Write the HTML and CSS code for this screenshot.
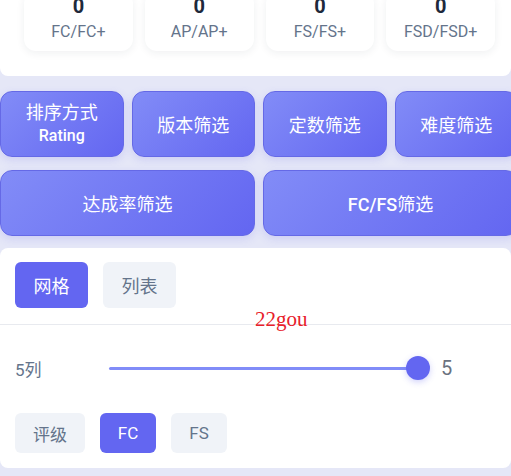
FILE: index.html
```html
<!DOCTYPE html>
<html lang="zh-CN">
<head>
    <meta charset="UTF-8">
    <meta name="viewport" content="width=device-width, initial-scale=1.0">
    <title>成绩统计</title>
    <link rel="stylesheet" href="styles.css">
</head>
<body>
    <!-- 统计卡片 -->
    <div class="stats-panel">
        <div class="stat-card">
            <div class="stat-value">0</div>
            <div class="stat-label">FC/FC+</div>
        </div>
        <div class="stat-card">
            <div class="stat-value">0</div>
            <div class="stat-label">AP/AP+</div>
        </div>
        <div class="stat-card">
            <div class="stat-value">0</div>
            <div class="stat-label">FS/FS+</div>
        </div>
        <div class="stat-card">
            <div class="stat-value">0</div>
            <div class="stat-label">FSD/FSD+</div>
        </div>
    </div>

    <!-- 筛选按钮 -->
    <div class="filters">
        <button class="filter-btn two-line">排序方式<span class="sub">Rating</span></button>
        <button class="filter-btn">版本筛选</button>
        <button class="filter-btn">定数筛选</button>
        <button class="filter-btn">难度筛选</button>
        <button class="filter-btn wide">达成率筛选</button>
        <button class="filter-btn wide"><span class="latin">FC/FS</span>筛选</button>
    </div>

    <!-- 显示设置 -->
    <div class="view-panel">
        <div class="tabs">
            <button class="tab active">网格</button>
            <button class="tab">列表</button>
        </div>
        <div class="watermark">22gou</div>

        <div class="settings">
            <div class="slider-row">
                <span class="slider-label">5列</span>
                <div class="slider">
                    <div class="track"></div>
                    <div class="thumb"></div>
                </div>
                <span class="slider-value">5</span>
            </div>

            <div class="chips">
                <button class="chip">评级</button>
                <button class="chip active">FC</button>
                <button class="chip">FS</button>
            </div>
        </div>
    </div>
</body>
</html>
```

FILE: styles.css
```css
body {
    margin: 0;
    padding: 0;
    width: 511px;
    height: 476px;
    overflow: hidden;
    background-color: #e5e7f7;
    font-family: Roboto, "Noto Sans CJK SC", sans-serif;
}

button {
    font-family: inherit;
    border: none;
    cursor: pointer;
}

/* Статистика сверху */
.stats-panel {
    height: 76px;
    box-sizing: border-box;
    background: #ffffff;
    border-radius: 0 0 8px 8px;
    display: flex;
    align-items: flex-end;
    gap: 12px;
    padding: 0 16px 25px 24px;
    overflow: hidden;
}

.stat-card {
    flex: 1;
    background: #ffffff;
    border-radius: 12px;
    box-shadow: 0 2px 8px rgba(30, 41, 59, 0.07);
    text-align: center;
    padding-bottom: 9px;
}

.stat-value {
    font-size: 20px;
    font-weight: bold;
    line-height: 28px;
    color: #1e293b;
}

.stat-label {
    margin-top: 2px;
    font-size: 16px;
    line-height: 20px;
    color: #64748b;
}

/* Фильтры */
.filters {
    width: 518px;
    display: grid;
    grid-template-columns: repeat(4, 123.5px);
    grid-auto-rows: 66px;
    gap: 13px 8px;
    padding: 15px 0 12px;
}

.filter-btn {
    background: linear-gradient(135deg, #828cf7 0%, #6366f1 100%);
    border: 1px solid #6569e6;
    border-radius: 12px;
    box-shadow: 0 3px 8px rgba(99, 102, 241, 0.18);
    color: #ffffff;
    font-size: 18px;
    font-weight: 400;
}

.filter-btn.wide {
    grid-column: span 2;
}

.filter-btn .latin {
    font-weight: 500;
}

.two-line {
    display: flex;
    flex-direction: column;
    align-items: center;
    justify-content: center;
    line-height: 23px;
}

.two-line .sub {
    font-size: 16px;
    font-weight: 500;
}

/* Панель вида */
.view-panel {
    position: relative;
    background: #ffffff;
    border-radius: 8px;
    height: 220px;
    box-sizing: border-box;
}

.tabs {
    display: flex;
    gap: 15px;
    padding: 14px 15px 16px;
    border-bottom: 1px solid #e8eaef;
}

.tab {
    width: 73px;
    height: 46px;
    border-radius: 6px;
    background: #f0f3f8;
    color: #64748b;
    font-size: 18px;
}

.tab.active {
    background: #6366f1;
    color: #ffffff;
}

.watermark {
    position: absolute;
    left: 255px;
    top: 61px;
    font-family: "Liberation Serif", serif;
    font-size: 21px;
    line-height: 21px;
    color: #e8202a;
}

.settings {
    padding: 31px 15px 15px;
}

.slider-row {
    display: flex;
    align-items: center;
    height: 24px;
}

.slider-label {
    width: 94px;
    font-size: 17px;
    color: #64748b;
}

.slider {
    width: 321px;
    display: flex;
    align-items: center;
}

.track {
    flex: 1;
    height: 3px;
    border-radius: 2px;
    background: #818cf8;
}

.thumb {
    width: 24px;
    height: 24px;
    margin-left: -12px;
    border-radius: 50%;
    background: #6366f1;
    box-shadow: 0 2px 6px rgba(99, 102, 241, 0.3);
}

.slider-value {
    margin-left: 11px;
    font-size: 20px;
    color: #6b7280;
}

.chips {
    display: flex;
    gap: 15px;
    margin-top: 33px;
}

.chip {
    height: 40px;
    padding: 0;
    border-radius: 6px;
    background: #f0f3f8;
    color: #64748b;
    font-size: 17px;
}

.chip:nth-child(1) {
    width: 70px;
}

.chip:nth-child(2) {
    width: 56px;
}

.chip:nth-child(3) {
    width: 56px;
}

.chip.active {
    background: #6366f1;
    color: #ffffff;
}
```
